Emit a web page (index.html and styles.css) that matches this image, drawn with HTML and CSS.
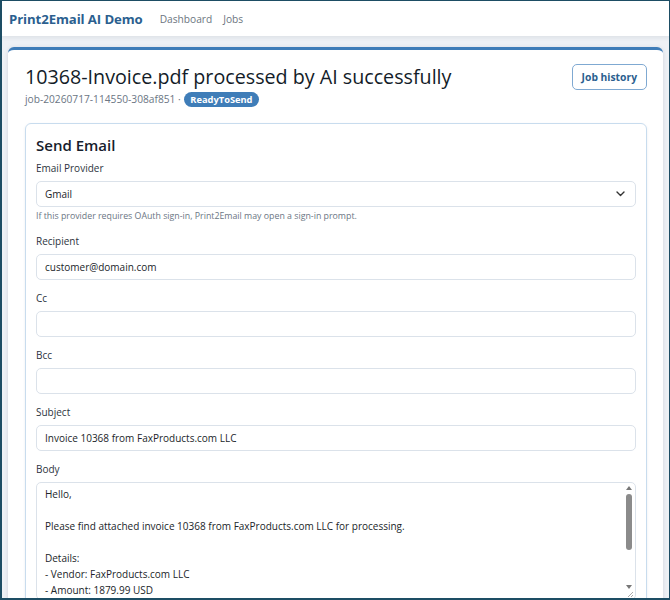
FILE: index.html
```html
<!DOCTYPE html>
<html>
  <head>
    <meta charset="utf-8" />
    <title>Print2Email AI Demo</title>
    <link rel="stylesheet" href="styles.css">
  </head>
  <body>
    <div class="frame">
      <nav class="navbar">
        <a class="brand" href="#">Print2Email AI Demo</a>
        <a class="nav-link" href="#">Dashboard</a>
        <a class="nav-link" href="#">Jobs</a>
      </nav>
      <main class="page">
        <section class="job-card">
          <div class="job-head">
            <div>
              <h1 class="job-title">10368-Invoice.pdf processed by AI successfully</h1>
              <div class="job-meta">job-20260717-114550-308af851 · <span class="badge">ReadyToSend</span></div>
            </div>
            <button class="btn-outline">Job history</button>
          </div>
          <div class="send-card">
            <h2 class="send-title">Send Email</h2>
            <div class="field">
              <label>Email Provider</label>
              <div class="select">
                <span>Gmail</span>
                <svg width="9" height="6" viewBox="0 0 9 6"><path d="M1 1l3.5 3.5 3.5-3.5" fill="none" stroke="#333" stroke-width="1.4" stroke-linecap="round" stroke-linejoin="round"/></svg>
              </div>
              <div class="help">If this provider requires OAuth sign-in, Print2Email may open a sign-in prompt.</div>
            </div>
            <div class="field">
              <label>Recipient</label>
              <input class="input" type="text" value="customer@domain.com">
            </div>
            <div class="field">
              <label>Cc</label>
              <input class="input" type="text" value="">
            </div>
            <div class="field">
              <label>Bcc</label>
              <input class="input" type="text" value="">
            </div>
            <div class="field">
              <label>Subject</label>
              <input class="input" type="text" value="Invoice 10368 from FaxProducts.com LLC">
            </div>
            <div class="field">
              <label>Body</label>
              <div class="textarea-wrap">
                <textarea class="input body-text">Hello,

Please find attached invoice 10368 from FaxProducts.com LLC for processing.

Details:
- Vendor: FaxProducts.com LLC
- Amount: 1879.99 USD
- Invoice date: 2026-07-17
- Due date: 2026-08-16

The invoice PDF is attached to this email.

Thank you,
Print2Email</textarea>
                <!-- drawn scrollbar, the headless browser hides the native one -->
                <div class="fake-scroll">
                  <span class="arrow-up"></span>
                  <span class="thumb"></span>
                  <span class="arrow-down"></span>
                </div>
                <svg class="grip" width="7" height="7" viewBox="0 0 7 7"><path d="M6 1L1 6M6 4L4 6" stroke="#aaa" stroke-width="1"/></svg>
              </div>
            </div>
          </div>
        </section>
      </main>
    </div>
  </body>
</html>
```

FILE: styles.css
```css
* {
  margin: 0;
  padding: 0;
  box-sizing: border-box;
}
body {
  font-family: "Open Sans", "Noto Sans", sans-serif;
  color: #212529;
  overflow: hidden;
}
.frame {
  height: 100vh;
  border: 2px solid #1d4d64;
  border-top-width: 1px;
  border-right-width: 1px;
  background: #eef1f5;
  overflow: hidden;
}

/* top bar */
.navbar {
  display: flex;
  align-items: center;
  height: 35px;
  padding: 0 7px;
  background: #fff;
  box-shadow: 0 2px 4px rgba(30, 50, 80, 0.08);
}
.navbar a {
  text-decoration: none;
}
.brand {
  font-size: 13.2px;
  font-weight: 700;
  color: #2b5f8f;
  margin-right: 17px;
  letter-spacing: -0.1px;
}
.nav-link {
  font-size: 10.2px;
  color: #6c7580;
  margin-right: 11px;
}

.page {
  padding: 11px 6px 0 6px;
}
.job-card {
  background: #fff;
  border-top: 3px solid #3f7db8;
  border-radius: 6px;
  box-shadow: 0 1px 4px rgba(30, 50, 80, 0.15);
  padding: 13px 16px 0 17px;
}
.job-head {
  display: flex;
  justify-content: space-between;
  align-items: flex-start;
}
.job-title {
  font-size: 19.7px;
  font-weight: 500;
  color: #131c28;
  line-height: 28px;
}
.job-meta {
  font-size: 10.2px;
  color: #6b7684;
  line-height: 16px;
}
.badge {
  display: inline-block;
  background: #3f7db8;
  color: #fff;
  font-weight: 700;
  font-size: 9.3px;
  line-height: 15px;
  padding: 0 6px;
  border-radius: 8px;
  margin-left: 1px;
}
.btn-outline {
  font-family: inherit;
  font-size: 10.3px;
  font-weight: 700;
  color: #2b5f8f;
  background: #fff;
  border: 1px solid #7fa9d2;
  border-radius: 5px;
  padding: 0 9px;
  height: 26px;
  margin-top: 1px;
}

.send-card {
  margin-top: 16px;
  border: 1px solid #c8dcee;
  border-radius: 6px;
  padding: 10px 10px 0 10px;
  box-shadow: 0 1px 3px rgba(30, 60, 100, 0.08);
}
.send-title {
  font-size: 15px;
  font-weight: 600;
  color: #16202c;
  line-height: 22px;
  margin-bottom: 5px;
}
.field {
  margin-bottom: 11px;
}
.field label {
  display: block;
  font-size: 10px;
  color: #2d3440;
  line-height: 14px;
  margin-bottom: 6px;
}
.input,
.select {
  display: block;
  width: 100%;
  height: 26px;
  border: 1px solid #dbe2ea;
  border-radius: 5px;
  padding: 0 8px;
  font-family: inherit;
  font-size: 10px;
  color: #212529;
  background: #fff;
  outline: none;
}
.select {
  display: flex;
  align-items: center;
  justify-content: space-between;
  padding-right: 10px;
}
.help {
  font-size: 8.8px;
  color: #6b7684;
  margin-top: 2px;
  line-height: 14px;
}

/* body textarea */
.textarea-wrap {
  position: relative;
}
.body-text {
  height: 118px;
  padding: 3px 20px 4px 8px;
  line-height: 16px;
  resize: none;
  overflow: hidden;
}
.fake-scroll {
  position: absolute;
  top: 2px;
  right: 2px;
  bottom: 11px;
  width: 10px;
  display: flex;
  flex-direction: column;
  align-items: center;
}
.arrow-up,
.arrow-down {
  width: 0;
  height: 0;
  border-left: 3.5px solid transparent;
  border-right: 3.5px solid transparent;
}
.arrow-up {
  border-bottom: 4px solid #777;
  margin-top: 2px;
}
.arrow-down {
  border-top: 4px solid #777;
  margin-top: auto;
}
.thumb {
  width: 6px;
  height: 56px;
  margin-top: 4px;
  background: #8b8b8b;
  border-radius: 3px;
}
.grip {
  position: absolute;
  right: 2px;
  bottom: 2px;
}
```
